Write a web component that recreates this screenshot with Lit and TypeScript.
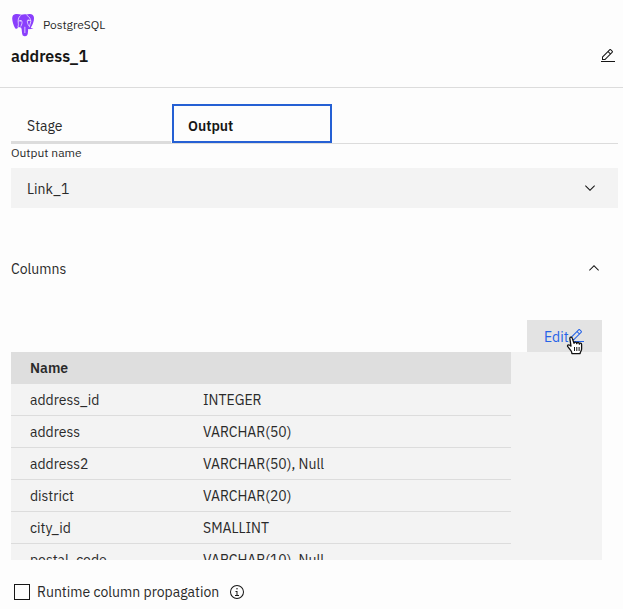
import { LitElement, html, css, svg } from "lit";
import { customElement, state } from "lit/decorators.js";
import { classMap } from "lit/directives/class-map.js";

interface Column {
  name: string;
  type: string;
}

const COLUMNS: Column[] = [
  { name: "address_id", type: "INTEGER" },
  { name: "address", type: "VARCHAR(50)" },
  { name: "address2", type: "VARCHAR(50), Null" },
  { name: "district", type: "VARCHAR(20)" },
  { name: "city_id", type: "SMALLINT" },
  { name: "postal_code", type: "VARCHAR(10), Null" },
];

const TABS = ["Stage", "Output"];

const pencil = html`<svg class="icon" viewBox="0 0 32 32" aria-hidden="true">
  <path d="M2 26H30V28H2zM25.4 9c.8-.8.8-2 0-2.8l-3.6-3.6c-.8-.8-2-.8-2.8 0L4 17.6V24h6.4L25.4 9zM20.4 4L24 7.6l-3 3L17.4 7 20.4 4zM6 22v-3.6l10-10 3.6 3.6-10 10H6z" />
</svg>`;

const chevron = (up: boolean) => html`<svg class="icon" viewBox="0 0 16 16" aria-hidden="true">
  ${up
    ? svg`<path d="M8 5L13 10 12.3 10.7 8 6.4 3.7 10.7 3 10z" />`
    : svg`<path d="M8 11L3 6 3.7 5.3 8 9.6 12.3 5.3 13 6z" />`}
</svg>`;

const elephant = html`<svg class="logo" viewBox="0 0 22 22" aria-hidden="true">
  <path fill="#8a3ffc" d="M4.4 1C2.300 1.100 1 2.700 1.100 5.300c.1 2.500 1.300 6.600 2.600 8.400.8 1.100 1.700 1 2.500.1l.9-1.100c.5.500 1.300.6 2.100.5l.5 1.500c.3 2 .3 3.700.8 5.300.3 1 1.200 1.400 2.300 1.300 1.600-.2 2.400-1 2.600-2.500l.4-4.100c1.900.3 3.600 0 4.800-.9-.9.1-2 .1-2.500-.3 1.700-2.400 3.100-6.200 3-9C21 2 19.200.8 16.800 1c-.9 0-1.600.2-2.300.4C12.900.9 11.200.9 9.600 1.700 8 1.100 6 .8 4.400 1z" />
  <path fill="none" stroke="#e8daff" stroke-width=".8" stroke-linecap="round" d="M8.600 2.400C6.500 4 6.300 6.900 6.700 9.400c.2 1.300.1 2.400-.4 3.400M7.100 7.400c1-.7 2.300-.7 2.900.1.500 1.800-.3 3.100-.9 4.600M14.700 2.200c2.200 1.300 3.400 3.300 3.500 5.500-.1 2-1.400 3.300-1.500 5M18 7c-1-.6-2.300-.5-3 .1-.2 1.600.4 3.100 1.300 4.500M12.700 13v5" />
  <path fill="#e8daff" d="M8 6.700h1.500v1H8zM15.200 6.300h1.500v1h-1.500z" />
</svg>`;

@customElement("app-root")
export class AppRoot extends LitElement {
  @state() private activeTab = "Output";
  @state() private expanded = true;

  static styles = css`
    :host {
      display: block;
      min-height: 100vh;
      background: #fdfdfd;
      color: #2a2a2a;
      font: 14px/20px "IBM Plex Sans", "Noto Sans", sans-serif;
    }
    * {
      box-sizing: border-box;
    }
    button,
    select {
      margin: 0;
      padding: 0;
      border: 0;
      border-radius: 0;
      background: none;
      color: inherit;
      font: inherit;
      text-align: left;
    }
    .icon {
      display: block;
      width: 16px;
      height: 16px;
      fill: #161616;
    }
    .header {
      height: 88px;
      padding: 12px 7px 0 11px;
      border-bottom: 1px solid #dcdcdc;
    }
    .product {
      display: flex;
      align-items: center;
      gap: 8px;
      height: 26px;
      font-size: 12px;
    }
    .logo {
      width: 24px;
      height: 24px;
    }
    .title-row {
      display: flex;
      align-items: center;
      justify-content: space-between;
      height: 36px;
    }
    h1 {
      margin: 0;
      font-size: 16px;
      font-weight: 600;
      color: #161616;
    }
    .body {
      padding: 16px 5px 0 11px;
    }
    .tabs {
      display: flex;
      gap: 1px;
      border-bottom: 1px solid #dcdcdc;
    }
    .tab {
      width: 160px;
      height: 39px;
      padding: 6px 16px 0;
      border-bottom: 2px solid #dcdcdc;
    }
    .tab.active {
      padding: 4px 14px 0;
      border: 2px solid #2560d4;
      font-weight: 600;
      color: #161616;
    }
    .field-label {
      display: block;
      height: 24px;
      line-height: 18px;
      font-size: 12px;
    }
    .select {
      display: grid;
      align-items: center;
      background: #f3f3f3;
    }
    .select select {
      grid-area: 1 / 1;
      width: 100%;
      height: 40px;
      padding: 2px 48px 0 16px;
      appearance: none;
    }
    .select .icon {
      grid-area: 1 / 1;
      justify-self: end;
      margin-right: 20px;
      pointer-events: none;
    }
    .disclosure {
      display: flex;
      align-items: center;
      justify-content: space-between;
      width: 100%;
      height: 40px;
      margin-top: 40px;
      padding-right: 16px;
    }
    .disclosure span,
    .edit span {
      padding-top: 2px;
    }
    .columns {
      margin-right: 16px;
      padding-top: 32px;
    }
    .edit {
      position: relative;
      display: flex;
      align-items: center;
      width: 75px;
      height: 32px;
      margin-left: auto;
      padding-left: 17px;
      background: #e3e3e3;
      color: #2563e8;
    }
    .edit .icon {
      fill: #2563e8;
    }
    .edit .hand {
      position: absolute;
      left: 39px;
      top: 16px;
      width: 18px;
      height: 19px;
    }
    .scroller {
      height: 208px;
      overflow-y: auto;
      scrollbar-width: none;
      background: #f3f3f3;
    }
    table {
      width: calc(100% - 91px);
      border-collapse: separate;
      border-spacing: 0;
      table-layout: fixed;
    }
    th,
    td {
      height: 32px;
      padding: 0 0 0 19px;
      text-align: left;
    }
    th {
      background: #dedede;
      font-weight: 600;
    }
    th:first-child {
      width: 192px;
    }
    td {
      padding-top: 1px;
      border-bottom: 1px solid #dcdcdc;
    }
    td + td {
      padding-left: 0;
    }
    .option {
      display: flex;
      align-items: center;
      padding: 22px 0 0 3px;
    }
    .option label {
      margin: 0 10px 0 7px;
    }
    .option input {
      appearance: none;
      width: 16px;
      height: 16px;
      margin: 0;
      border: 1px solid #161616;
    }
    .option input:checked {
      background: #161616;
    }
  `;

  render() {
    return html`
      <header class="header">
        <div class="product">${elephant}<span>PostgreSQL</span></div>
        <div class="title-row">
          <h1>address_1</h1>
          <button aria-label="Edit name">${pencil}</button>
        </div>
      </header>
      <main class="body">
        <div class="tabs" role="tablist">
          ${TABS.map(
            (tab) => html`<button
              role="tab"
              class=${classMap({ tab: true, active: tab === this.activeTab })}
              aria-selected=${tab === this.activeTab}
              @click=${() => (this.activeTab = tab)}
            >${tab}</button>`,
          )}
        </div>
        <label class="field-label" for="output-name">Output name</label>
        <div class="select">
          <select id="output-name">
            <option>Link_1</option>
          </select>
          ${chevron(false)}
        </div>
        <button
          class="disclosure"
          aria-expanded=${this.expanded}
          @click=${() => (this.expanded = !this.expanded)}
        ><span>Columns</span>${chevron(this.expanded)}</button>
        ${this.expanded ? this.renderColumns() : ""}
        <div class="option">
          <input type="checkbox" id="propagation" />
          <label for="propagation">Runtime column propagation</label>
          <button aria-label="More information">
            <svg class="icon" viewBox="0 0 32 32" aria-hidden="true">
              <path d="M17 22V14H13v2h2v6H12v2h8V22zM16 8a1.500 1.500 0 1 0 1.500 1.500A1.500 1.500 0 0 0 16 8z" />
              <path d="M16 30A14 14 0 1 1 30 16 14 14 0 0 1 16 30zM16 4A12 12 0 1 0 28 16 12 12 0 0 0 16 4z" />
            </svg>
          </button>
        </div>
      </main>
    `;
  }

  private renderColumns() {
    return html`<section class="columns">
      <button class="edit">
        <span>Edit</span>${pencil}
        <svg class="hand" viewBox="0 0 18 19" aria-hidden="true">
          <path
            fill="#fff" stroke="#111" stroke-width="1.300" stroke-linejoin="round"
            d="M5 10.200L3.800 9.300C2.500 8.400.8 9.300 1.800 10.700l2.900 3.700c.7.900 1.200 1.500 1.200 3.200h8.200c0-1.600 1.500-2.700 1.500-4.700V8.400c0-1.500-2-1.700-2.200-.3-.1-1.900-2.400-2.200-2.700-.5-.2-1.800-2.400-1.900-2.700-.3L6.300 2.200C5.800.5 3.400 1 3.900 2.800z"
          />
          <path fill="none" stroke="#111" d="M8.500 11v4M10.800 11v4M13.100 11v4" />
        </svg>
      </button>
      <div class="scroller">
        <table>
          <thead>
            <tr><th scope="col">Name</th><th scope="col" aria-label="Type"></th></tr>
          </thead>
          <tbody>
            ${COLUMNS.map((c) => html`<tr><td>${c.name}</td><td>${c.type}</td></tr>`)}
          </tbody>
        </table>
      </div>
    </section>`;
  }
}
